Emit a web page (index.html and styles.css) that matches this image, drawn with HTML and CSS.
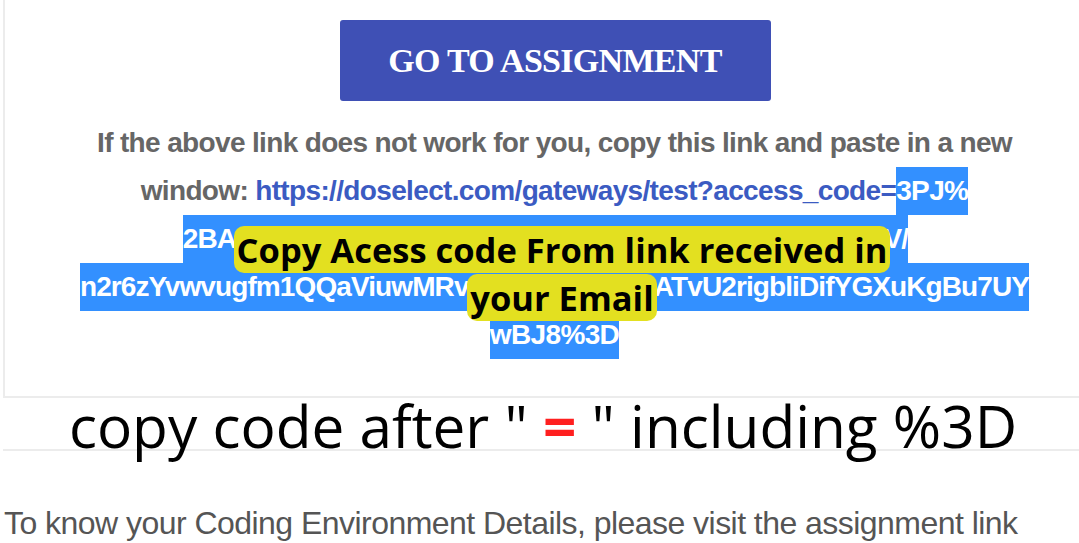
FILE: index.html
```html
<!DOCTYPE html>
<html>
<head>
<meta charset="utf-8">
<link rel="stylesheet" href="styles.css">
</head>
<body>
<div class="card">
  <div class="btn-row"><a class="btn">GO TO ASSIGNMENT</a></div>
  <div class="msg">
    <div class="line">If the above link does not work for you, copy this link and paste in a new</div>
    <div class="line">window: <a class="link">https://doselect.com/gateways/test?access_code=<span class="sel">3PJ%</span></a></div>
    <div class="line line-left"><span class="sel sel-narrow">2BACK00RcOHdCoSNw8ryEXPWy7CLC%2BLdZyuIVI/XV/</span></div>
    <div class="line"><span class="sel sel-narrow">n2r6zYvwvugfm1QQaViuwMRvw7LLArPptdJ6ATvU2rigbliDifYGXuKgBu7UY</span></div>
    <div class="line"><span class="sel">wBJ8%3D</span></div>
  </div>
  <div class="note"><span class="hl">Copy Acess code From link received in<br>your Email</span></div>
</div>
<div class="caption">copy code after " <span class="eq">=</span> " including %3D</div>
<p class="footer">To know your Coding Environment Details, please visit the assignment link</p>
</body>
</html>
```
FILE: styles.css
```css
html, body {
  margin: 0;
  padding: 0;
  background: #ffffff;
}
body {
  width: 1079px;
  height: 543px;
  overflow: hidden;
  font-family: "Liberation Sans", Arial, sans-serif;
}
.card {
  position: relative;
  margin-left: 3px;
  height: 396px;
  border-left: 2px solid #ececec;
  border-bottom: 2px solid #ececec;
}
.btn-row {
  display: flex;
  justify-content: center;
  padding-top: 20px;
  padding-left: 26px;
}
.btn {
  display: flex;
  align-items: center;
  justify-content: center;
  width: 431px;
  height: 81px;
  background: #3f50b5;
  border-radius: 3px;
  color: #ffffff;
  font-family: "Liberation Serif", "Times New Roman", serif;
  font-weight: bold;
  font-size: 34px;
  letter-spacing: -0.7px;
}
.msg {
  margin-top: 18px;
  text-align: center;
  font-weight: bold;
  font-size: 28px;
  letter-spacing: -0.65px;
  color: #666666;
  padding-left: 25px;
}
.line {
  line-height: 48px;
  height: 48px;
  white-space: nowrap;
}
.line-left {
  padding-right: 18px;
}
.link {
  color: #3b5bc2;
}
.sel {
  display: inline-block;
  background: #3390ff;
  color: #ffffff;
  line-height: 48px;
}
.sel-narrow {
  letter-spacing: -0.9px;
}
.note {
  position: absolute;
  left: 0;
  right: 0;
  top: 226px;
  text-align: center;
  font-family: "Open Sans", sans-serif;
  font-weight: bold;
  font-size: 34.5px;
  line-height: 48px;
  color: #000000;
  padding-left: 40px;
}
.hl {
  background: #e3e020;
  border-radius: 10px;
  padding: 0 3px;
  -webkit-box-decoration-break: clone;
  box-decoration-break: clone;
}
.caption {
  height: 51px;
  line-height: 54px;
  border-bottom: 2px solid #ececec;
  margin-left: 3px;
  padding-left: 4px;
  text-align: center;
  font-family: "Open Sans", sans-serif;
  font-size: 58.5px;
  color: #000000;
  white-space: nowrap;
}
.eq {
  color: #ff1f1f;
  font-weight: bold;
}
.footer {
  margin: 54px 0 0 4px;
  font-size: 32px;
  line-height: 36px;
  color: #555555;
  letter-spacing: -0.54px;
  white-space: nowrap;
}
```
